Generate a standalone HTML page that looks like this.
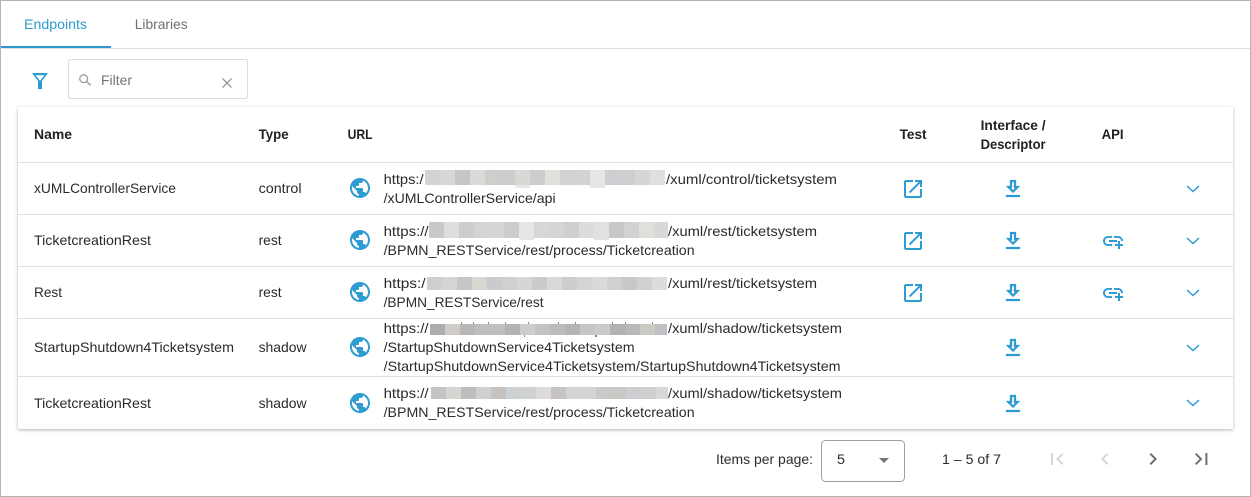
<!DOCTYPE html>
<html><head><meta charset="utf-8"><style>
html,body{margin:0;padding:0;background:#fff}
svg{display:block}
text{font-family:"Liberation Sans",sans-serif;font-size:14px;fill:#2b2b2b}
.b{font-weight:bold;fill:#212121;font-size:14px}
.i{fill:#2e9bd3}
.m{fill:#6f6f6f}
</style></head><body>
<svg width="1251" height="497" viewBox="0 0 1251 497" xmlns="http://www.w3.org/2000/svg">
<defs>
<filter id="s" x="-2%" y="-5%" width="104%" height="110%"><feDropShadow dx="0" dy="1" stdDeviation="1.5" flood-color="#000" flood-opacity=".3"/></filter>
<path id="g" d="M12 2C6.48 2 2 6.48 2 12s4.48 10 10 10 10-4.48 10-10S17.52 2 12 2zm-1 17.93c-3.95-.49-7-3.85-7-7.93 0-.62.08-1.21.21-1.79L9 15v1c0 1.1.9 2 2 2v1.93zm6.9-2.54c-.26-.81-1-1.39-1.9-1.39h-1v-3c0-.55-.45-1-1-1H8v-2h2c.55 0 1-.45 1-1V7h2c1.1 0 2-.9 2-2v-.41c2.93 1.19 5 4.06 5 7.41 0 2.08-.8 3.97-2.1 5.39z"/>
<path id="o" d="M19 19H5V5h7V3H5c-1.11 0-2 .9-2 2v14c0 1.1.89 2 2 2h14c1.1 0 2-.9 2-2v-7h-2v7zM14 3v2h3.59l-9.83 9.83 1.41 1.41L19 6.41V10h2V3h-7z"/>
<path id="d" d="M19 9h-4V3H9v6H5l7 7 7-7zm-8 2V5h2v6h1.17L12 13.17 9.83 11H11zm-6 7h14v2H5z" stroke="#2e9bd3" stroke-width=".25"/>
<path id="l" d="M8 11h8v2H8zm12.1 1H22c0-2.76-2.24-5-5-5h-4v1.9h4c1.71 0 3.1 1.39 3.1 3.1zM3.9 12c0-1.71 1.39-3.1 3.1-3.1h4V7H7c-2.76 0-5 2.24-5 5s2.24 5 5 5h4v-1.9H7c-1.71 0-3.1-1.39-3.1-3.1zM19 12h-2v3h-3v2h3v3h2v-3h3v-2h-3z"/>
<polyline id="c" points="1187,0 1193,5.5 1199,0" fill="none" stroke="#2e9bd3" stroke-width="1.5"/>
</defs>
<rect x="0.5" y="0.5" width="1250" height="496" fill="#fff" stroke="#b4b4b4"/>
<rect x="1" y="48" width="1249" height="1" fill="#e0e0e0"/>
<rect x="1" y="46" width="110" height="2" fill="#2e9bd3"/>
<text x="24" y="29" textLength="63" lengthAdjust="spacingAndGlyphs" style="fill:#2e9bd3">Endpoints</text>
<text x="134.7" y="29" textLength="53" lengthAdjust="spacingAndGlyphs" style="fill:#6f6f6f">Libraries</text>
<path class="i" fill-rule="evenodd" d="M32 73h16l-6 8v8h-4v-8zM35.6 75.2h8.8l-4.4 5.6z"/>
<rect x="68.5" y="59.5" width="179" height="39" rx="2" fill="#fff" stroke="#dcdcdc"/>
<circle cx="83.7" cy="78.7" r="3.9" fill="none" stroke="#9a9a9a" stroke-width="1.3"/><line x1="86.6" y1="81.6" x2="90.5" y2="85.2" stroke="#9a9a9a" stroke-width="1.4"/>
<text x="101" y="85" textLength="31" lengthAdjust="spacingAndGlyphs" style="fill:#757575">Filter</text>
<path d="M222.5 78.5l9 9m0-9l-9 9" stroke="#8a8a8a" stroke-width="1.2" fill="none"/>

<rect x="18" y="107" width="1215" height="322" fill="#fff" filter="url(#s)"/>
<g fill="#e0e0e0"><rect x="18" y="162" width="1215" height="1"/><rect x="18" y="214" width="1215" height="1"/><rect x="18" y="266" width="1215" height="1"/><rect x="18" y="318" width="1215" height="1"/><rect x="18" y="376" width="1215" height="1"/></g>

<text class="b" x="34" y="139" textLength="38" lengthAdjust="spacingAndGlyphs">Name</text>
<text class="b" x="258.6" y="139" textLength="30" lengthAdjust="spacingAndGlyphs">Type</text>
<text class="b" x="347.6" y="139" textLength="25" lengthAdjust="spacingAndGlyphs">URL</text>
<text class="b" x="899.6" y="139" textLength="27" lengthAdjust="spacingAndGlyphs">Test</text>
<text class="b" x="980.6" y="130" textLength="65" lengthAdjust="spacingAndGlyphs">Interface /</text>
<text class="b" x="980.6" y="149" textLength="65" lengthAdjust="spacingAndGlyphs">Descriptor</text>
<text class="b" x="1101.6" y="139" textLength="22" lengthAdjust="spacingAndGlyphs">API</text>

<text x="34" y="193" textLength="142" lengthAdjust="spacingAndGlyphs">xUMLControllerService</text>
<text x="258.6" y="193" textLength="43" lengthAdjust="spacingAndGlyphs">control</text>
<text x="34" y="245" textLength="117" lengthAdjust="spacingAndGlyphs">TicketcreationRest</text>
<text x="258.6" y="245" textLength="23" lengthAdjust="spacingAndGlyphs">rest</text>
<text x="34" y="297" textLength="28" lengthAdjust="spacingAndGlyphs">Rest</text>
<text x="258.6" y="297" textLength="23" lengthAdjust="spacingAndGlyphs">rest</text>
<text x="34" y="352" textLength="200" lengthAdjust="spacingAndGlyphs">StartupShutdown4Ticketsystem</text>
<text x="258.6" y="352" textLength="48" lengthAdjust="spacingAndGlyphs">shadow</text>
<text x="34" y="408" textLength="117" lengthAdjust="spacingAndGlyphs">TicketcreationRest</text>
<text x="258.6" y="408" textLength="48" lengthAdjust="spacingAndGlyphs">shadow</text>

<!-- URLs -->
<text x="383.6" y="184" textLength="40" lengthAdjust="spacingAndGlyphs">https:/</text>
<text x="666" y="184" textLength="171" lengthAdjust="spacingAndGlyphs">/xuml/control/ticketsystem</text>
<text x="383.6" y="203" textLength="172" lengthAdjust="spacingAndGlyphs">/xUMLControllerService/api</text>
<text x="383.6" y="236" textLength="45" lengthAdjust="spacingAndGlyphs">https://</text>
<text x="668" y="236" textLength="149" lengthAdjust="spacingAndGlyphs">/xuml/rest/ticketsystem</text>
<text x="383.6" y="255" textLength="311" lengthAdjust="spacingAndGlyphs">/BPMN_RESTService/rest/process/Ticketcreation</text>
<text x="383.6" y="288" textLength="42" lengthAdjust="spacingAndGlyphs">https:/</text>
<text x="668" y="288" textLength="149" lengthAdjust="spacingAndGlyphs">/xuml/rest/ticketsystem</text>
<text x="383.6" y="307" textLength="160" lengthAdjust="spacingAndGlyphs">/BPMN_RESTService/rest</text>
<text x="383.6" y="333" textLength="45" lengthAdjust="spacingAndGlyphs">https://</text>
<text x="668" y="333" textLength="174" lengthAdjust="spacingAndGlyphs">/xuml/shadow/ticketsystem</text>
<text x="383.6" y="352" textLength="251" lengthAdjust="spacingAndGlyphs">/StartupShutdownService4Ticketsystem</text>
<text x="383.6" y="371" textLength="457" lengthAdjust="spacingAndGlyphs">/StartupShutdownService4Ticketsystem/StartupShutdown4Ticketsystem</text>
<text x="383.6" y="398" textLength="45" lengthAdjust="spacingAndGlyphs">https://</text>
<text x="668" y="398" textLength="174" lengthAdjust="spacingAndGlyphs">/xuml/shadow/ticketsystem</text>
<text x="383.6" y="417" textLength="311" lengthAdjust="spacingAndGlyphs">/BPMN_RESTService/rest/process/Ticketcreation</text>

<!-- blurred blocks -->
<g>
<rect x="425" y="170" width="15" height="15" fill="#d3d3d3"/><rect x="440" y="170" width="15" height="15" fill="#d6d7d9"/><rect x="455" y="170" width="15" height="15" fill="#c6c6c6"/><rect x="470" y="170" width="15" height="15" fill="#d8dadc"/><rect x="485" y="170" width="15" height="15" fill="#cfcecb"/><rect x="500" y="170" width="15" height="15" fill="#cccdcf"/><rect x="515" y="170" width="15" height="18" fill="#e8e8e6"/><rect x="515" y="170" width="15" height="15" fill="#d9d8d5"/><rect x="530" y="170" width="15" height="15" fill="#cdcdcd"/><rect x="545" y="170" width="15" height="15" fill="#e0e0dd"/><rect x="560" y="170" width="15" height="15" fill="#d2d2d2"/><rect x="575" y="170" width="15" height="15" fill="#d2d3d3"/><rect x="590" y="170" width="15" height="18" fill="#e6e6e4"/><rect x="605" y="170" width="15" height="15" fill="#ccced1"/><rect x="620" y="170" width="15" height="15" fill="#cfcfcd"/><rect x="635" y="170" width="15" height="15" fill="#d6d6d6"/><rect x="650" y="170" width="15" height="15" fill="#dfdfdf"/>

<rect x="429" y="222" width="15" height="16" fill="#c9c9c9"/><rect x="444" y="222" width="15" height="16" fill="#dededc"/><rect x="459" y="222" width="15" height="16" fill="#cdcdcd"/><rect x="474" y="222" width="15" height="16" fill="#d4d4d4"/><rect x="489" y="222" width="15" height="16" fill="#d6d6d6"/><rect x="504" y="222" width="15" height="16" fill="#cccccc"/><rect x="519" y="222" width="15" height="18" fill="#e6e6e4"/><rect x="534" y="222" width="15" height="16" fill="#d7d7d9"/><rect x="549" y="222" width="15" height="16" fill="#d5d5d5"/><rect x="564" y="222" width="15" height="16" fill="#cfcfcf"/><rect x="579" y="222" width="15" height="16" fill="#dcdcdc"/><rect x="594" y="222" width="15" height="18" fill="#e2e2e0"/><rect x="609" y="222" width="15" height="16" fill="#c9c8c6"/><rect x="624" y="222" width="15" height="16" fill="#d2d2d2"/><rect x="639" y="222" width="15" height="16" fill="#dfdfdc"/><rect x="654" y="222" width="14" height="16" fill="#d8d8da"/>

<rect x="427" y="277" width="15" height="13" fill="#cfcfcf"/><rect x="442" y="277" width="15" height="13" fill="#d5d5d7"/><rect x="457" y="277" width="15" height="13" fill="#c6c6c6"/><rect x="472" y="277" width="15" height="13" fill="#d8d7d2"/><rect x="487" y="277" width="15" height="13" fill="#cbcbce"/><rect x="502" y="277" width="15" height="13" fill="#d0d0d0"/><rect x="517" y="277" width="15" height="13" fill="#d6d6d6"/><rect x="532" y="277" width="15" height="13" fill="#cbcbcb"/><rect x="547" y="277" width="15" height="13" fill="#d9d9d9"/><rect x="562" y="277" width="15" height="13" fill="#cdcdcd"/><rect x="577" y="277" width="15" height="13" fill="#d4d4d4"/><rect x="592" y="277" width="15" height="13" fill="#dadada"/><rect x="607" y="277" width="15" height="13" fill="#d0d0d0"/><rect x="622" y="277" width="15" height="13" fill="#c8c8c8"/><rect x="637" y="277" width="15" height="13" fill="#d1d1d1"/><rect x="652" y="277" width="15" height="13" fill="#dcdcdc"/>

<rect x="430" y="324" width="15" height="11" fill="#adadad"/><rect x="445" y="324" width="15" height="11" fill="#cfccc8"/><rect x="460" y="324" width="15" height="11" fill="#b7b7b7"/><rect x="475" y="324" width="15" height="11" fill="#bfbfc2"/><rect x="490" y="324" width="15" height="11" fill="#c0bfbd"/><rect x="505" y="324" width="15" height="11" fill="#b3b3b3"/><rect x="520" y="324" width="15" height="11" fill="#cdcdc9"/><rect x="535" y="324" width="15" height="11" fill="#c3c3c6"/><rect x="550" y="324" width="15" height="11" fill="#bcbcbc"/><rect x="565" y="324" width="15" height="11" fill="#b4b4b4"/><rect x="580" y="324" width="15" height="11" fill="#c6c6c6"/><rect x="595" y="324" width="15" height="11" fill="#cacaca"/><rect x="610" y="324" width="15" height="11" fill="#b2b2b2"/><rect x="625" y="324" width="15" height="11" fill="#b8b8b8"/><rect x="640" y="324" width="15" height="11" fill="#cbcbc5"/><rect x="655" y="324" width="12" height="11" fill="#bfbfc6"/>
<g fill="#8a8a8a"><rect x="461" y="322" width="1" height="2"/><rect x="473" y="322" width="1" height="2"/><rect x="488" y="322" width="1" height="2"/><rect x="505" y="322" width="1" height="2"/><rect x="528" y="322" width="1" height="2"/><rect x="558" y="322" width="1" height="2"/><rect x="575" y="322" width="1" height="2"/><rect x="612" y="322" width="1" height="2"/><rect x="625" y="322" width="1" height="2"/><rect x="652" y="322" width="1" height="2"/><rect x="524" y="335" width="1" height="2"/><rect x="595" y="335" width="2" height="2"/></g>

<rect x="431" y="387" width="15" height="12" fill="#c4c4c4"/><rect x="446" y="387" width="15" height="12" fill="#d5d5d2"/><rect x="461" y="387" width="15" height="12" fill="#bdbdbf"/><rect x="476" y="387" width="15" height="12" fill="#d0d0d0"/><rect x="491" y="387" width="15" height="12" fill="#c8c2be"/><rect x="506" y="387" width="15" height="12" fill="#ccd2d4"/><rect x="521" y="387" width="15" height="12" fill="#d1d1cf"/><rect x="536" y="387" width="15" height="12" fill="#dcdcdc"/><rect x="551" y="387" width="15" height="12" fill="#c8c3c2"/><rect x="566" y="387" width="15" height="12" fill="#d3d3d6"/><rect x="581" y="387" width="15" height="12" fill="#d3d5d3"/><rect x="596" y="387" width="15" height="12" fill="#c9c9c9"/><rect x="611" y="387" width="15" height="12" fill="#c8c8c4"/><rect x="626" y="387" width="15" height="12" fill="#cdced1"/><rect x="641" y="387" width="15" height="12" fill="#cfcfcf"/><rect x="656" y="387" width="12" height="12" fill="#d8d8d6"/>
</g>

<!-- icons -->
<use href="#g" class="i" x="348" y="176"/><use href="#g" class="i" x="348" y="228"/><use href="#g" class="i" x="348" y="280"/><use href="#g" class="i" x="348" y="335"/><use href="#g" class="i" x="348" y="391"/>
<use href="#o" class="i" x="901" y="177"/><use href="#o" class="i" x="901" y="229"/><use href="#o" class="i" x="901" y="281"/>
<use href="#d" class="i" x="1001" y="177"/><use href="#d" class="i" x="1001" y="229"/><use href="#d" class="i" x="1001" y="281"/><use href="#d" class="i" x="1001" y="336"/><use href="#d" class="i" x="1001" y="392"/>
<use href="#l" class="i" x="1101" y="229"/><use href="#l" class="i" x="1101" y="281"/>
<use href="#c" y="186"/><use href="#c" y="238"/><use href="#c" y="290"/><use href="#c" y="345"/><use href="#c" y="400"/>

<!-- paginator -->
<text x="716" y="464" textLength="97" lengthAdjust="spacingAndGlyphs">Items per page:</text>
<rect x="821.5" y="440.5" width="83" height="41" rx="4" fill="#fff" stroke="#9e9e9e"/>
<text x="837" y="464" textLength="8" lengthAdjust="spacingAndGlyphs">5</text>
<polygon points="879,458 889,458 884,463" fill="#757575"/>
<text x="942" y="464" textLength="59" lengthAdjust="spacingAndGlyphs">1 – 5 of 7</text>
<path transform="translate(1045 447)" fill="#d6d6d6" d="M18.41 16.59L13.83 12l4.58-4.59L17 6l-6 6 6 6zM6 6h2v12H6z"/>
<path transform="translate(1093 447)" fill="#d6d6d6" d="M15.41 7.41L14 6l-6 6 6 6 1.41-1.41L10.83 12z"/>
<path transform="translate(1141 447)" fill="#6f6f6f" d="M10 6L8.59 7.41 13.17 12l-4.58 4.59L10 18l6-6z"/>
<path transform="translate(1189.4 447)" fill="#6f6f6f" d="M5.59 7.41L10.18 12l-4.59 4.59L7 18l6-6-6-6zM16 6h2v12h-2z"/>
</svg>
</body></html>
